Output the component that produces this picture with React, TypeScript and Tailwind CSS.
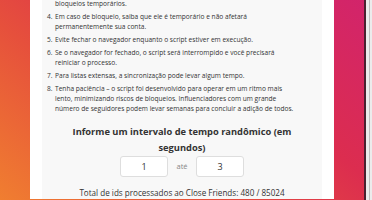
import React from 'react';

const items: { n: string; lines: string[] }[] = [
  { n: '4.', lines: ['Em caso de bloqueio, saiba que ele é temporário e não afetará', 'permanentemente sua conta.'] },
  { n: '5.', lines: ['Evite fechar o navegador enquanto o script estiver em execução.'] },
  { n: '6.', lines: ['Se o navegador for fechado, o script será interrompido e você precisará', 'reiniciar o processo.'] },
  { n: '7.', lines: ['Para listas extensas, a sincronização pode levar algum tempo.'] },
  {
    n: '8.',
    lines: [
      'Tenha paciência – o script foi desenvolvido para operar em um ritmo mais',
      'lento, minimizando riscos de bloqueios. Influenciadores com um grande',
      'número de seguidores podem levar semanas para concluir a adição de todos.',
    ],
  },
];

export default function App() {
  return (
    <div className="flex h-[200px] w-[372px] overflow-hidden font-['Open_Sans',sans-serif] text-[#333]">
      <div className="flex-1 bg-[linear-gradient(40deg,#f07e30_0%,#e6503c_35%,#dc2d4f_65%,#d2246b_100%)] pl-[30px]">
        <div className="h-full w-[304px] bg-white px-3">
          <div className="h-full bg-[#f8f8f8] pl-[5px]">
            <div className="-mt-[1px] pl-[8px] text-[6.6px] leading-[10px] whitespace-nowrap">bloqueios temporários.</div>
            <ol className="mt-[3px] flex flex-col gap-[3px] text-[6.6px] leading-[10px]">
              {items.map((it) => (
                <li key={it.n} className="flex whitespace-nowrap">
                  <span className="w-[8px] shrink-0">{it.n}</span>
                  <span>
                    {it.lines.map((l, i) => (
                      <span key={i} className="block">{l}</span>
                    ))}
                  </span>
                </li>
              ))}
            </ol>
            <div className="mt-[10px] pr-[5px] text-center text-[9.3px] leading-[16px] font-bold text-[#333]">
              Informe um intervalo de tempo randômico (em
              <br />
              segundos)
            </div>
            <div className="mt-0 flex items-center justify-center gap-[8px] pr-[5px]">
              <div className="flex h-[21px] w-[48px] items-center justify-center rounded-[3px] border border-[#dedede] bg-white text-[9px]">1</div>
              <span className="w-[12px] text-center text-[7.5px] text-[#888]">até</span>
              <div className="flex h-[21px] w-[48px] items-center justify-center rounded-[3px] border border-[#dedede] bg-white text-[9px]">3</div>
            </div>
            <div className="mt-[10px] pr-[5px] text-center text-[8.1px] leading-[12px] whitespace-nowrap">
              Total de ids processados ao Close Friends: 480 / 85024
            </div>
          </div>
        </div>
      </div>
      <div className="w-[2px] bg-[#4a2030]" />
      <div className="flex w-[6px] justify-center bg-[#ececec]">
        <div className="w-[1px] bg-[#bdbdbd]" />
      </div>
    </div>
  );
}
